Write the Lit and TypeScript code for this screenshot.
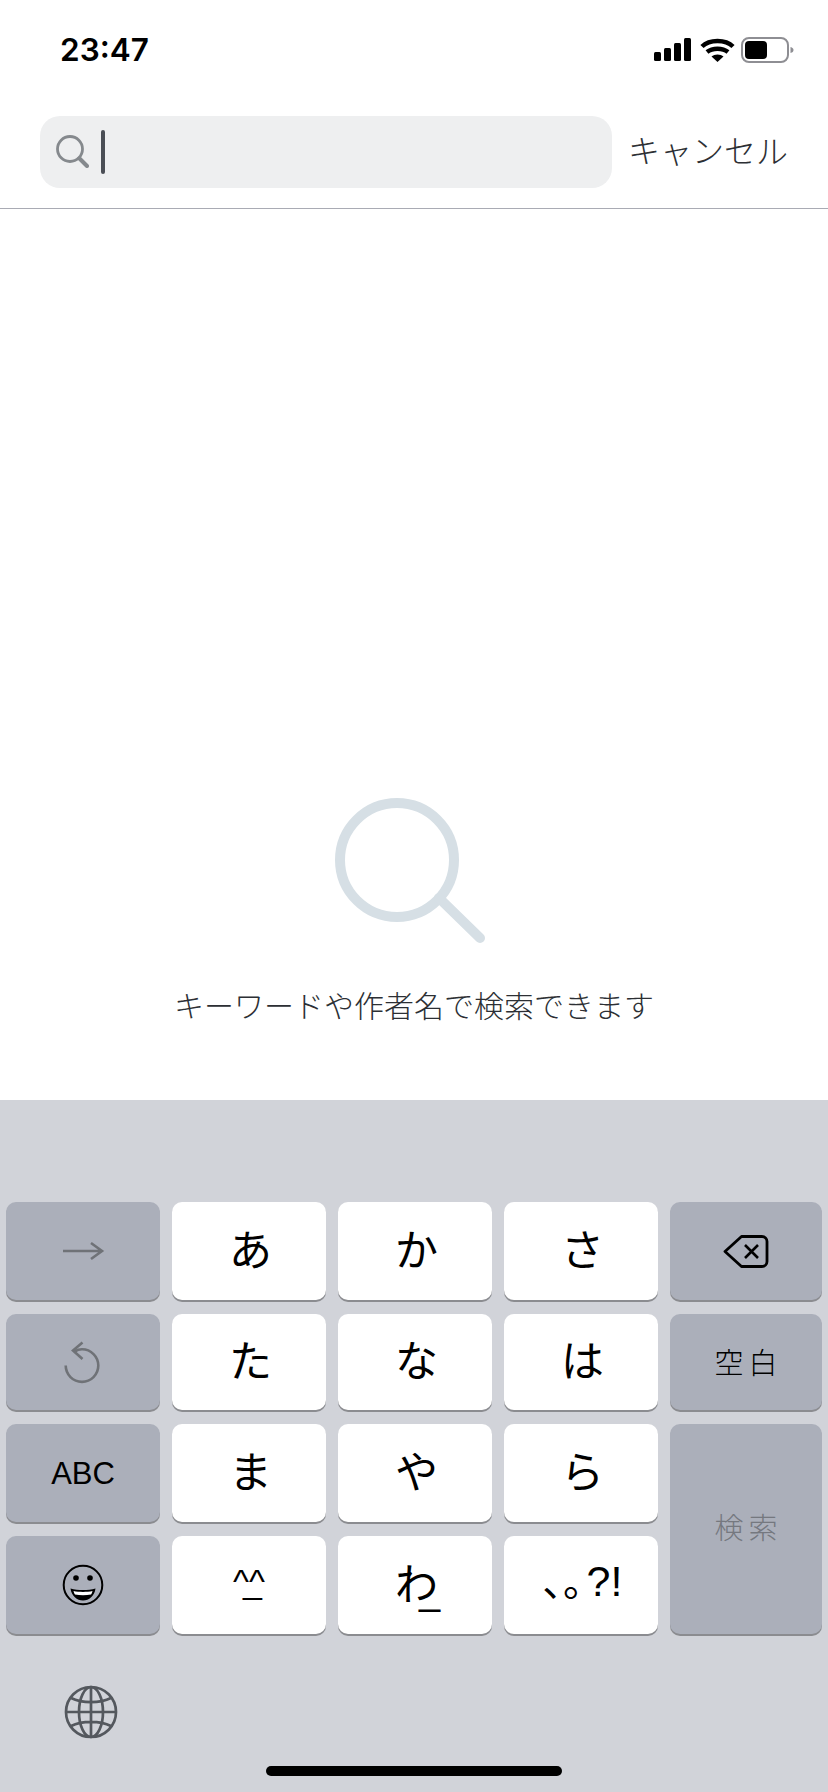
import { LitElement, html, css, svg } from 'lit';
import { customElement } from 'lit/decorators.js';

const arrowIcon = svg`<svg class="ico" width="44" height="20" viewBox="0 0 44 20">
  <path d="M2 10H41M30 2l11 8-11 8" fill="none" stroke="#6f7277" stroke-width="2.6"/>
</svg>`;

const undoIcon = svg`<svg class="ico undo" width="40" height="44" viewBox="0 0 40 44">
  <path d="M13.5 11.5C17 9.5 19 9.3 21 9.3a16.3 16.3 0 1 1-16.3 16.3" fill="none" stroke="#6f7277" stroke-width="2.6"/>
  <path d="M21.5 2.5 12 10.5l9.500 8.500" fill="none" stroke="#6f7277" stroke-width="2.6"/>
</svg>`;

const deleteIcon = svg`<svg class="ico" width="46" height="35" viewBox="0 0 46 35">
  <path d="M2 17.500 18.500 2.500H39a5 5 0 0 1 5 5v20a5 5 0 0 1-5 5H18.500Z" fill="none" stroke="#000" stroke-width="2.800" stroke-linejoin="round"/>
  <path d="M22 11l13 13M35 11 22 24" fill="none" stroke="#000" stroke-width="2.600"/>
</svg>`;

const smileIcon = svg`<svg class="ico" width="42" height="42" viewBox="0 0 42 42">
  <circle cx="21" cy="21" r="19.300" fill="none" stroke="#000" stroke-width="2"/>
  <circle cx="14" cy="14" r="2.800"/>
  <circle cx="28" cy="14" r="2.800"/>
  <path d="M8.500 24.500C16 26.500 26 26.500 33.500 24.500 32.500 32 27 36.500 21 36.500S9.500 32 8.500 24.500Z"/>
  <path d="M11.500 27C17 28.200 25 28.200 30.500 27 30 28.800 29.500 29.800 29 30.500 24 31.500 18 31.500 13 30.500 12.500 29.800 12 28.800 11.500 27Z" fill="#fff"/>
</svg>`;

const globeIcon = svg`<svg width="54" height="54" viewBox="0 0 54 54" fill="none" stroke="#54585e" stroke-width="2.700">
  <circle cx="27" cy="27" r="25"/>
  <ellipse cx="27" cy="27" rx="12" ry="25"/>
  <path d="M27 2V52M2 27H52M7 13C18 18.500 36 18.500 47 13M7 41C18 35.500 36 35.500 47 41"/>
</svg>`;

type Key = { label?: unknown; cls?: string };

const keys: Key[] = [
  { label: arrowIcon, cls: 'fn' },
  { label: 'あ' },
  { label: 'か' },
  { label: 'さ' },
  { label: deleteIcon, cls: 'fn' },
  { label: undoIcon, cls: 'fn' },
  { label: 'た' },
  { label: 'な' },
  { label: 'は' },
  { label: html`<span class="spaced">空白</span>`, cls: 'fn' },
  { label: html`<span class="abc">ABC</span>`, cls: 'fn' },
  { label: 'ま' },
  { label: 'や' },
  { label: 'ら' },
  { label: html`<span class="spaced search">検索</span>`, cls: 'fn tall' },
  { label: smileIcon, cls: 'fn' },
  { label: html`<span class="kao">^^<span class="kao-mouth">_</span></span>` },
  { label: html`<span class="wa">わ<span class="wa-bar">_</span></span>` },
  { label: html`<span class="punct">、。<span class="latin">?!</span></span>` }
];

@customElement('app-root')
export class AppRoot extends LitElement {
  static styles = css`
    :host {
      display: flex;
      flex-direction: column;
      width: 828px;
      height: 1792px;
      background: #fff;
      font-family: 'Noto Sans CJK JP', 'Liberation Sans', sans-serif;
      color: #000;
      overflow: hidden;
    }

    .status {
      height: 116px;
      flex: none;
      display: flex;
      justify-content: space-between;
      padding: 32px 32px 0 60px;
      box-sizing: border-box;
    }
    .time {
      font-family: 'Inter', sans-serif;
      font-weight: 600;
      font-size: 31.5px;
      line-height: 36px;
    }
    .status svg {
      display: block;
      margin-top: 5px;
    }

    .search-row {
      height: 93px;
      flex: none;
      box-sizing: border-box;
      display: flex;
      gap: 16px;
      padding: 0 0 20px 40px;
      border-bottom: 1px solid #a9abb4;
    }
    .search-box {
      width: 572px;
      height: 72px;
      background: #eeeff0;
      border-radius: 20px;
      display: flex;
      align-items: center;
      padding-left: 16px;
      box-sizing: border-box;
      gap: 12px;
    }
    .search-box svg {
      margin-top: -2px;
    }
    .cursor {
      width: 4px;
      height: 44px;
      border-radius: 2px;
      background: #4a4e55;
    }
    .cancel {
      font-size: 32px;
      line-height: 66px;
      font-weight: 300;
      color: #2c2f34;
      white-space: nowrap;
    }

    .empty {
      flex: 1;
      display: flex;
      flex-direction: column;
      align-items: center;
      padding-top: 589px;
      box-sizing: border-box;
    }
    .empty svg {
      display: block;
      margin-left: -8px;
    }
    .empty p {
      margin: 40px 0 0;
      font-size: 30px;
      line-height: 40px;
      font-weight: 300;
      color: #2c2f34;
      white-space: nowrap;
    }

    .keyboard {
      height: 692px;
      flex: none;
      background: #d1d3d9;
      box-sizing: border-box;
      padding: 102px 6px 0;
      position: relative;
    }
    .keys {
      display: grid;
      grid-template-columns: 154px 154px 154px 154px 152px;
      grid-template-rows: 98px 96px 98px 98px;
      gap: 14px 12px;
    }
    .key {
      background: #fff;
      border-radius: 10px;
      box-shadow: 0 2px 0 #8b8c90;
      display: flex;
      align-items: center;
      justify-content: center;
      font-size: 43px;
      line-height: 1;
      padding: 0 0 8px 3px;
      box-sizing: border-box;
    }
    .key.fn {
      background: #abafba;
      padding: 0;
    }
    .key.tall {
      grid-column: 5;
      grid-row: 3 / span 2;
    }
    .ico {
      display: block;
    }
    .ico.undo {
      margin-right: 4px;
    }
    .spaced {
      font-size: 29px;
      letter-spacing: 5px;
      margin: 0 -5px 2px 0;
      font-weight: 300;
    }
    .spaced.search {
      color: #75787f;
      margin-bottom: 6px;
    }
    .abc {
      font-family: 'Liberation Sans', sans-serif;
      font-size: 31px;
    }
    .kao {
      font-family: 'Liberation Sans', sans-serif;
      font-size: 34px;
      position: relative;
      margin-right: 3px;
    }
    .kao-mouth {
      position: absolute;
      left: 10px;
      top: 0;
    }
    .wa {
      position: relative;
    }
    .wa-bar {
      font-family: 'Liberation Sans', sans-serif;
      font-size: 38px;
      position: absolute;
      left: 24px;
      top: 12px;
    }
    .punct {
      font-feature-settings: 'palt';
      font-size: 40px;
    }
    .latin {
      font-family: 'Liberation Sans', sans-serif;
      font-size: 43px;
      margin-left: 4px;
    }

    .globe {
      position: absolute;
      left: 64px;
      top: 585px;
    }
    .home-bar {
      position: absolute;
      left: 266px;
      top: 666px;
      width: 296px;
      height: 10px;
      border-radius: 5px;
      background: #000;
    }
  `;

  render() {
    return html`
      <div class="status">
        <span class="time">23:47</span>
        <svg width="142" height="26" viewBox="0 0 142 26">
          <rect x="0" y="15" width="7" height="9" rx="1.500" />
          <rect x="10" y="11" width="7" height="13" rx="1.500" />
          <rect x="20" y="6" width="7" height="18" rx="1.500" />
          <rect x="30" y="1" width="7" height="23" rx="1.500" />
          <path d="M48 9.500C55.500 2 71.500 2 79 9.500" fill="none" stroke="#000" stroke-width="4.500" />
          <path d="M53 15C58.500 10.500 68.500 10.500 74 15" fill="none" stroke="#000" stroke-width="4.500" />
          <path d="M57.500 19.500C60.500 16.800 66.500 16.800 69.500 19.500L63.500 25Z" />
          <rect x="88" y="1" width="46" height="24" rx="7" fill="none" stroke="#8e8e93" stroke-width="2" />
          <rect x="91" y="4" width="22" height="18" rx="4" />
          <path d="M136.500 10c2 .500 3 1.500 3 3s-1 2.500-3 3Z" fill="#8e8e93" />
        </svg>
      </div>

      <div class="search-row">
        <div class="search-box">
          <svg width="33" height="33" viewBox="0 0 33 33" fill="none" stroke="#85898d">
            <circle cx="14" cy="14" r="12.500" stroke-width="2.800" />
            <path d="M23.500 23.500 31 31" stroke-width="4" stroke-linecap="round" />
          </svg>
          <div class="cursor"></div>
        </div>
        <span class="cancel">キャンセル</span>
      </div>

      <div class="empty">
        <svg width="152" height="146" viewBox="0 0 152 146" fill="none" stroke="#d6dfe5" stroke-width="10">
          <circle cx="63" cy="62" r="57" />
          <path d="M105 100 146 140" stroke-linecap="round" />
        </svg>
        <p>キーワードや作者名で検索できます</p>
      </div>

      <div class="keyboard">
        <div class="keys">
          ${keys.map((k) => html`<div class="key ${k.cls ?? ''}">${k.label}</div>`)}
        </div>
        <div class="globe">${globeIcon}</div>
        <div class="home-bar"></div>
      </div>
    `;
  }
}
